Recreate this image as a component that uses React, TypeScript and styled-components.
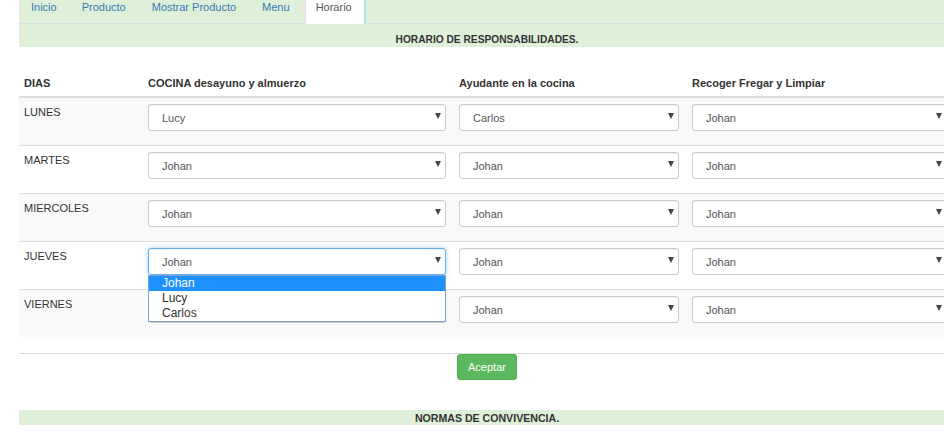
import React from "react";
import styled, { createGlobalStyle, css } from "styled-components";

const GlobalStyle = createGlobalStyle`
  html, body { margin: 0; padding: 0; background: #fff; overflow: hidden; }
  body { font-family: "Liberation Sans", Arial, sans-serif; color: #333; font-size: 11px; }
`;

const Page = styled.div`
  width: 936px;
  margin-left: 19px;
`;

const TabBar = styled.ul`
  display: flex;
  list-style: none;
  margin: 0;
  padding: 0;
  height: 23px;
  background: #dff0d8;
  border-bottom: 1px solid #ddd;
`;

const Tab = styled.li<{ $active?: boolean }>`
  margin-right: 2px;
  padding: 0 12px;
  height: 23px;
  line-height: 15px;
  font-size: 11px;
  color: #337ab7;
  &:nth-child(1) {
    margin-right: 1px;
  }
  &:nth-child(4) {
    margin-right: 3px;
  }
  ${(p) =>
    p.$active &&
    css`
      background: #fff;
      color: #555;
      height: 24px;
      border-left: 1px solid #e2e2e2;
      border-right: 2px solid #aeeadb;
      padding: 0 12px 0 10px;
    `}
`;

const SectionTitle = styled.div<{ $height: number; $pad: number; $size: number }>`
  background: #dff0d8;
  height: ${(p) => p.$height}px;
  box-sizing: border-box;
  padding-top: ${(p) => p.$pad}px;
  line-height: 14px;
  text-align: center;
  font-weight: bold;
  font-size: ${(p) => p.$size}px;
  color: #333;
`;

const Table = styled.div`
  margin-top: 25px;
  display: grid;
  grid-template-columns: 124px 311px 233px 268px;
`;

const HeadCell = styled.div`
  padding: 3px 5px 7px;
  line-height: 16px;
  height: 26px;
  box-sizing: border-box;
  font-weight: bold;
  font-size: 11px;
  color: #333;
  border-bottom: 2px solid #ddd;
`;

const Cell = styled.div<{ $striped: boolean; $first: boolean }>`
  position: relative;
  height: ${(p) => (p.$first ? 47 : 48)}px;
  box-sizing: border-box;
  padding: 6px 5px 0 5px;
  line-height: 16px;
  font-size: 11px;
  color: #333;
  background: ${(p) => (p.$striped ? "#f9f9f9" : "#fff")};
  border-top: ${(p) => (p.$first ? "none" : "1px solid #ddd")};
`;

const SelectBox = styled.div<{ $focus?: boolean }>`
  display: flex;
  align-items: center;
  justify-content: space-between;
  width: calc(100% - 3px);
  height: 27px;
  box-sizing: border-box;
  padding: 0 4px 0 13px;
  background: #fff;
  border: 1px solid ${(p) => (p.$focus ? "#66afe9" : "#ccc")};
  border-radius: 3px;
  box-shadow: ${(p) =>
    p.$focus
      ? "inset 0 1px 1px rgba(0,0,0,.075), 0 0 5px rgba(102,175,233,.6)"
      : "inset 0 1px 1px rgba(0,0,0,.075)"};
  font-size: 11px;
  color: #555;
`;

const Arrow = styled.span`
  width: 0;
  height: 0;
  margin-top: -3px;
  border-left: 3px solid transparent;
  border-right: 3px solid transparent;
  border-top: 6px solid #444;
`;

const OptionList = styled.ul`
  position: absolute;
  left: 5px;
  top: 33px;
  width: calc(100% - 13px);
  margin: 0;
  padding: 0;
  list-style: none;
  background: #fff;
  border: 1px solid #7f9fd0;
  box-sizing: border-box;
  z-index: 2;
`;

const OptionItem = styled.li<{ $selected?: boolean }>`
  height: 15px;
  line-height: 15px;
  padding-left: 13px;
  font-size: 12px;
  color: ${(p) => (p.$selected ? "#fff" : "#333")};
  background: ${(p) => (p.$selected ? "#1e90ff" : "#fff")};
`;

const Footer = styled.div`
  margin-top: 16px;
  border-top: 1px solid #ddd;
  display: flex;
  justify-content: center;
`;

const Button = styled.button`
  width: 60px;
  height: 26px;
  margin: 0;
  padding: 0;
  background: #5cb85c;
  border: 1px solid #4cae4c;
  border-radius: 3px;
  color: #fff;
  font-family: "Liberation Sans", Arial, sans-serif;
  font-size: 11px;
`;

const Spacer = styled.div`
  height: 30px;
`;

const rows: { day: string; values: string[] }[] = [
  { day: "LUNES", values: ["Lucy", "Carlos", "Johan"] },
  { day: "MARTES", values: ["Johan", "Johan", "Johan"] },
  { day: "MIERCOLES", values: ["Johan", "Johan", "Johan"] },
  { day: "JUEVES", values: ["Johan", "Johan", "Johan"] },
  { day: "VIERNES", values: ["Johan", "Johan", "Johan"] },
];

const tabs = ["Inicio", "Producto", "Mostrar Producto", "Menu", "Horario"];

export default function App() {
  return (
    <>
      <GlobalStyle />
      <Page>
        <TabBar>
          {tabs.map((t) => (
            <Tab key={t} $active={t === "Horario"}>
              {t}
            </Tab>
          ))}
        </TabBar>
        <SectionTitle $height={23} $pad={9} $size={10.2}>
          HORARIO DE RESPONSABILIDADES.
        </SectionTitle>
        <Table>
          <HeadCell>DIAS</HeadCell>
          <HeadCell>COCINA desayuno y almuerzo</HeadCell>
          <HeadCell>Ayudante en la cocina</HeadCell>
          <HeadCell>Recoger Fregar y Limpiar</HeadCell>
          {rows.map((r, i) => {
            const striped = i % 2 === 0;
            const first = i === 0;
            return (
              <React.Fragment key={r.day}>
                <Cell $striped={striped} $first={first}>
                  {r.day}
                </Cell>
                {r.values.map((v, j) => {
                  const open = r.day === "JUEVES" && j === 0;
                  return (
                    <Cell key={j} $striped={striped} $first={first}>
                      <SelectBox $focus={open}>
                        {v}
                        <Arrow />
                      </SelectBox>
                      {open && (
                        <OptionList>
                          <OptionItem $selected>Johan</OptionItem>
                          <OptionItem>Lucy</OptionItem>
                          <OptionItem>Carlos</OptionItem>
                        </OptionList>
                      )}
                    </Cell>
                  );
                })}
              </React.Fragment>
            );
          })}
        </Table>
        <Footer>
          <Button>Aceptar</Button>
        </Footer>
        <Spacer />
        <SectionTitle $height={15} $pad={1} $size={10.6}>
          NORMAS DE CONVIVENCIA.
        </SectionTitle>
      </Page>
    </>
  );
}
